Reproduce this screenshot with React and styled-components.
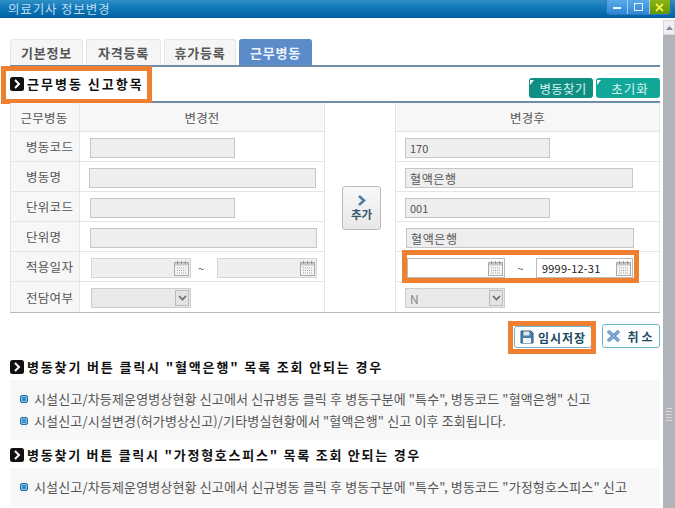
import React from "react";
import styled, { createGlobalStyle } from "styled-components";

const Global = createGlobalStyle`
  html, body { margin: 0; padding: 0; background: #fff; }
  body { font-family: "Noto Sans CJK KR", "Liberation Sans", sans-serif; color: #555; font-size: 12px; }
  * { box-sizing: border-box; }
`;

const Page = styled.div`
  position: relative; width: 675px; height: 508px; overflow: hidden; background: #fff;
  display: flex; flex-direction: column;
`;
const TitleBar = styled.div`
  height: 18px; flex: none; display: flex; justify-content: space-between; align-items: flex-start;
  background: linear-gradient(#2f8fc6 0%, #0f78b8 45%, #00609f 100%);
  padding: 0 5px 0 8px;
`;
const Title = styled.div`
  color: #bfdcee; font-size: 12.5px; line-height: 18px; letter-spacing: .85px;
`;
const WinButtons = styled.div`
  display: flex; width: 63px; height: 14px; border-radius: 0 0 3px 3px; overflow: hidden;
  box-shadow: 0 0 0 1px #2b7fb8;
`;
const WinBtn = styled.div`
  flex: 1; display: flex; align-items: center; justify-content: center;
  background: ${p => p.$close ? "linear-gradient(#8cb51a,#5f9600)" : "linear-gradient(#5aa9e8,#2f86d8)"};
  border-right: 1px solid #a8cdea;
  &:last-child { border-right: 0; }
`;
const Body = styled.div`flex: 1; display: flex; min-height: 0;`;
const Content = styled.div`width: 663px; flex: none; padding: 21px 3px 0 10px; display: flex; flex-direction: column;`;
const Scrollbar = styled.div`
  width: 12px; flex: none; background: linear-gradient(#fff 2px, #b0b4b8 2px); padding-top: 2px;
  display: flex; flex-direction: column; align-items: center;
`;
const ScrollTop = styled.div`
  width: 12px; height: 15px; background: #eef0f1; border: 1px solid #d5d8da; display: flex; align-items: center; justify-content: center;
`;
const Grip = styled.div`
  margin-top: 373px; width: 6px; height: 14px;
  background: repeating-linear-gradient(#d9dbdd 0 1px, transparent 1px 3px);
`;
const Tabs = styled.div`display: flex; gap: 3px; height: 28px; border-bottom: 2px solid #6c8ea8; align-items: flex-end;`;
const Tab = styled.div`
  width: ${p => p.$w}px; height: 26px; display: flex; align-items: center; justify-content: center;
  border: 1px solid ${p => p.$on ? "#5b8bc9" : "#e6e6e6"}; border-bottom: 0; border-radius: 3px 3px 0 0;
  background: ${p => p.$on ? "#5b8bc9" : "#f5f5f5"};
  color: ${p => p.$on ? "#eef4fb" : "#555"}; font-weight: 700; font-size: 13px; letter-spacing: .8px;
`;
const SectionBar = styled.div`
  position: relative; height: 36px; border-bottom: 2px solid #6c8ea8; display: flex; align-items: center; justify-content: space-between;
`;
const Heading = styled.div`
  display: flex; align-items: center; gap: 3px; color: #111; font-weight: 700; font-size: 13px; letter-spacing: ${p => p.$sp}px; white-space: nowrap; line-height: 16px;
`;
const Actions = styled.div`display: flex; gap: 3px; margin-top: 8px;`;
const TealBtn = styled.div`
  position: relative; width: 64px; height: 20px; border-radius: 3px; background: ${p => p.$light ? "#12a899" : "#0e8f82"};
  color: #d7f2ee; font-size: 12.5px; letter-spacing: ${p => p.$light ? 1 : .2}px; display: flex; align-items: center; justify-content: center; padding-left: 4px;
  &::before { content: ""; position: absolute; left: 1px; top: 2px; border-top: 5px solid #fff; border-right: 4px solid transparent; }
`;
const Grid = styled.div`
  position: relative; display: grid; grid-template-columns: 70px 245px 70px 265px;
  grid-template-rows: 29px repeat(6, 30px); border-bottom: 1px solid #bbb;
`;
const Head = styled.div`
  background: #f7f7f7; display: flex; align-items: center; justify-content: center;
  border-bottom: 1px solid #e5e5e5; border-left: ${p => p.$first ? "1px solid #e5e5e5" : 0}; border-right: 1px solid #e5e5e5;
  color: #555; font-size: 12.5px; letter-spacing: .2px; padding-right: ${p => p.$nudge ? 2 : 0}px;
`;
const Label = styled.div`
  background: #f7f7f7; display: flex; align-items: center; padding-left: 15px;
  border-bottom: ${p => p.$last ? 0 : "1px solid #e5e5e5"}; border-left: 1px solid #e5e5e5; border-right: 1px solid #e5e5e5;
  color: #555; font-size: 12.5px; letter-spacing: .3px; white-space: nowrap;
`;
const Cell = styled.div`
  display: flex; align-items: center; padding-left: ${p => p.$pad || 0}px; padding-top: 3px; padding-bottom: ${p => p.$last ? 1 : 0}px;
  border-bottom: ${p => p.$last ? 0 : "1px solid #e5e5e5"};
  border-right: ${p => p.$right ? "1px solid #e5e5e5" : 0};
  border-left: ${p => p.$left ? "1px solid #e5e5e5" : 0};
`;
const Middle = styled.div`
  grid-column: 3; grid-row: 2 / span 6; display: flex; align-items: flex-start; justify-content: center; padding: 54px 0 0 3px;
`;
const AddBtn = styled.div`
  width: 39px; height: 44px; border: 1px solid #bbb; border-radius: 3px; background: linear-gradient(#f8f8f8,#e8e8e8);
  display: flex; flex-direction: column; align-items: center; justify-content: center; gap: 2px;
  color: #33566b; font-weight: 700; font-size: 11.5px; line-height: 13px;
`;
const Input = styled.div`
  width: ${p => p.$w}px; height: 20px; border: 1px solid #c6c6c6; background: #eee;
  color: #555; display: flex; align-items: center; padding-left: 4px; flex: none;
  font-size: ${p => p.$num ? 11 : 12}px; letter-spacing: ${p => p.$num ? 0 : .6}px;
`;
const DateBox = styled.div`
  width: ${p => p.$w || 100}px; height: 20px; flex: none; border: 1px solid ${p => p.$on ? "#bbb" : "#d5d5d5"};
  background: ${p => p.$on ? "#fff" : "#eee"}; display: flex; align-items: center; justify-content: space-between;
  padding: 0 1px 0 5px; color: #222; font-size: 11px; letter-spacing: .2px;
`;
const Tilde = styled.span`
  width: ${p => p.$w || 26}px; padding-right: ${p => p.$shift || 0}px; text-align: center; color: #555; font-size: 11px; flex: none;
`;
const Select = styled.div`
  width: 100px; height: 20px; flex: none; border: 1px solid #ccc; background: #e9e9e9; color: #888;
  display: flex; align-items: center; justify-content: space-between; padding: 0 1px 0 4px;
`;
const SelArrow = styled.div`
  width: 14px; height: 16px; border: 1px solid #bbb; background: #e2e4e4; display: flex; align-items: center; justify-content: center;
`;
const Footer = styled.div`display: flex; justify-content: flex-end; gap: 10px; margin-top: 11px; height: 24px; position: relative;`;
const FootBtn = styled.div`
  width: ${p => p.$w}px; height: ${p => p.$h || 24}px; margin-top: ${p => p.$top || 0}px; border: 1px solid #6fb3d2; border-radius: 3px; background: #fff;
  display: flex; align-items: center; justify-content: center; gap: ${p => p.$gap || 4}px; color: #1d4a63; font-weight: 700; font-size: 12px;
  letter-spacing: ${p => p.$sp}px;
`;
const InfoTitle = styled(Heading)`margin-top: ${p => p.$mt}px; height: 16px;`;
const InfoBox = styled.div`
  background: #f7f7f7; margin-top: 5px; padding: 10px 0 10px 10px; display: flex; flex-direction: column; gap: 4px;
`;
const Item = styled.div`
  display: flex; align-items: center; gap: 6px; color: #555; font-size: 13px; line-height: 18px; white-space: nowrap; letter-spacing: .15px;
`;
const Mark = styled.span`
  width: 8px; height: 8px; flex: none; border-radius: 2px; background: #3f8fc8; border: 1px solid #2a6fa8; box-shadow: inset 0 0 0 1px #7fc4ea;
`;
const Highlight = styled.div`
  position: absolute; left: ${p => p.$x}px; top: ${p => p.$y}px; width: ${p => p.$w}px; height: ${p => p.$h}px;
  border: 5px solid #f08030; pointer-events: none;
`;

const Square = () => (
  <svg width="14" height="14" viewBox="0 0 14 14" style={{ flex: "none" }}>
    <rect width="14" height="14" rx="2.5" fill="#111" />
    <path d="M5 3l4 4-4 4" fill="none" stroke="#fff" strokeWidth="2" />
  </svg>
);
const Calendar = () => (
  <svg width="15" height="15" viewBox="0 0 15 15" style={{ flex: "none" }}>
    <rect x=".5" y="1.5" width="14" height="13" fill="#f4f4f4" stroke="#aaa" />
    <rect x="1" y="2" width="13" height="2.5" fill="#c8c8c8" />
    <path d="M3.5 0v3M7.5 0v3M11.5 0v3" stroke="#999" />
    <path d="M3 7h9M3 9.5h9M3 12h9" stroke="#aaa" strokeDasharray="1 1" />
  </svg>
);
const Chevron = () => (
  <svg width="9" height="6" viewBox="0 0 9 6"><path d="M1 1l3.5 3.5L8 1" fill="none" stroke="#667" strokeWidth="1.6" /></svg>
);
const Floppy = () => (
  <svg width="14" height="14" viewBox="0 0 14 14" style={{ flex: "none" }}>
    <path d="M1 1h10l2 2v10H1z" fill="#4d7ea8" stroke="#2d5a80" />
    <rect x="3.5" y="1.5" width="6" height="4" fill="#dfe8ef" />
    <rect x="3" y="8" width="8" height="5" fill="#f2f5f7" />
  </svg>
);
const Cross = () => (
  <svg width="15" height="14" viewBox="0 0 15 14" style={{ flex: "none" }}>
    <path d="M2 2l11 10M13 2L2 12" stroke="#5d8fc4" strokeWidth="3.4" />
    <path d="M2 2l11 10M13 2L2 12" stroke="#a9c8e6" strokeWidth="1" />
  </svg>
);
const DoubleArrow = () => (
  <svg width="10" height="11" viewBox="0 0 10 11"><path d="M2 1l5 4.5L2 10" fill="none" stroke="#4d7ea8" strokeWidth="2.6" /></svg>
);

export default function App() {
  return (
    <Page>
      <Global />
      <TitleBar>
        <Title>의료기사 정보변경</Title>
        <WinButtons>
          <WinBtn><svg width="8" height="3"><rect width="8" height="2" y="1" fill="#dff" /></svg></WinBtn>
          <WinBtn><svg width="9" height="8"><rect x=".5" y=".5" width="8" height="7" fill="none" stroke="#eaf6ff" /></svg></WinBtn>
          <WinBtn $close><svg width="9" height="9"><path d="M1 1l7 7M8 1L1 8" stroke="#eef04a" strokeWidth="1.8" /></svg></WinBtn>
        </WinButtons>
      </TitleBar>
      <Body>
        <Content>
          <Tabs>
            <Tab $w={73}>기본정보</Tab>
            <Tab $w={75}>자격등록</Tab>
            <Tab $w={72}>휴가등록</Tab>
            <Tab $w={73} $on>근무병동</Tab>
          </Tabs>
          <SectionBar>
            <Heading $sp={2}><Square />근무병동 신고항목</Heading>
            <Actions>
              <TealBtn>병동찾기</TealBtn>
              <TealBtn $light>초기화</TealBtn>
            </Actions>
            <Highlight $x={-9} $y={-1} $w={151} $h={38} />
          </SectionBar>
          <Grid>
            <Head $first $nudge>근무병동</Head>
            <Head>변경전</Head>
            <div />
            <Head $first>변경후</Head>

            <Label>병동코드</Label>
            <Cell $right $pad={10}><Input $w={145} /></Cell>
            <Middle><AddBtn><DoubleArrow />추가</AddBtn></Middle>
            <Cell $left $right $pad={9}><Input $w={145} $num>170</Input></Cell>

            <Label>병동명</Label>
            <Cell $right $pad={9}><Input $w={227} /></Cell>
            <Cell $left $right $pad={9}><Input $w={228}>혈액은행</Input></Cell>

            <Label>단위코드</Label>
            <Cell $right $pad={10}><Input $w={145} /></Cell>
            <Cell $left $right $pad={9}><Input $w={145} $num>001</Input></Cell>

            <Label>단위명</Label>
            <Cell $right $pad={10}><Input $w={227} /></Cell>
            <Cell $left $right $pad={10}><Input $w={228}>혈액은행</Input></Cell>

            <Label>적용일자</Label>
            <Cell $right $pad={11}>
              <DateBox><span /><Calendar /></DateBox>
              <Tilde $shift={6}>~</Tilde>
              <DateBox><span /><Calendar /></DateBox>
            </Cell>
            <Cell $left $right $pad={11}>
              <DateBox $on $w={98}><span /><Calendar /></DateBox>
              <Tilde $w={31}>~</Tilde>
              <DateBox $on $w={97}>9999-12-31<Calendar /></DateBox>
            </Cell>

            <Label $last>전담여부</Label>
            <Cell $right $last $pad={11}><Select><span /><SelArrow><Chevron /></SelArrow></Select></Cell>
            <Cell $left $right $last $pad={9}><Select>N<SelArrow><Chevron /></SelArrow></Select></Cell>

            <Highlight $x={392} $y={147} $w={237} $h={33} />
          </Grid>
          <Footer>
            <FootBtn $w={78} $h={22} $top={2} $sp={1}><Floppy />임시저장</FootBtn>
            <FootBtn $w={58} $sp={3} $gap={6}><Cross />취소</FootBtn>
            <Highlight $x={498} $y={-3} $w={88} $h={33} />
          </Footer>
          <InfoTitle $mt={11} $sp={1.85}><Square />병동찾기 버튼 클릭시 "혈액은행" 목록 조회 안되는 경우</InfoTitle>
          <InfoBox>
            <Item><Mark />시설신고/차등제운영병상현황 신고에서 신규병동 클릭 후 병동구분에 "특수", 병동코드 "혈액은행" 신고</Item>
            <Item><Mark />시설신고/시설변경(허가병상신고)/기타병실현황에서 "혈액은행" 신고 이후 조회됩니다.</Item>
          </InfoBox>
          <InfoTitle $mt={7} $sp={1.75}><Square />병동찾기 버튼 클릭시 "가정형호스피스" 목록 조회 안되는 경우</InfoTitle>
          <InfoBox>
            <Item><Mark />시설신고/차등제운영병상현황 신고에서 신규병동 클릭 후 병동구분에 "특수", 병동코드 "가정형호스피스" 신고</Item>
          </InfoBox>
        </Content>
        <Scrollbar>
          <ScrollTop><svg width="7" height="4"><path d="M0 4l3.5-4L7 4z" fill="#889" /></svg></ScrollTop>
          <Grip />
        </Scrollbar>
      </Body>
    </Page>
  );
}
